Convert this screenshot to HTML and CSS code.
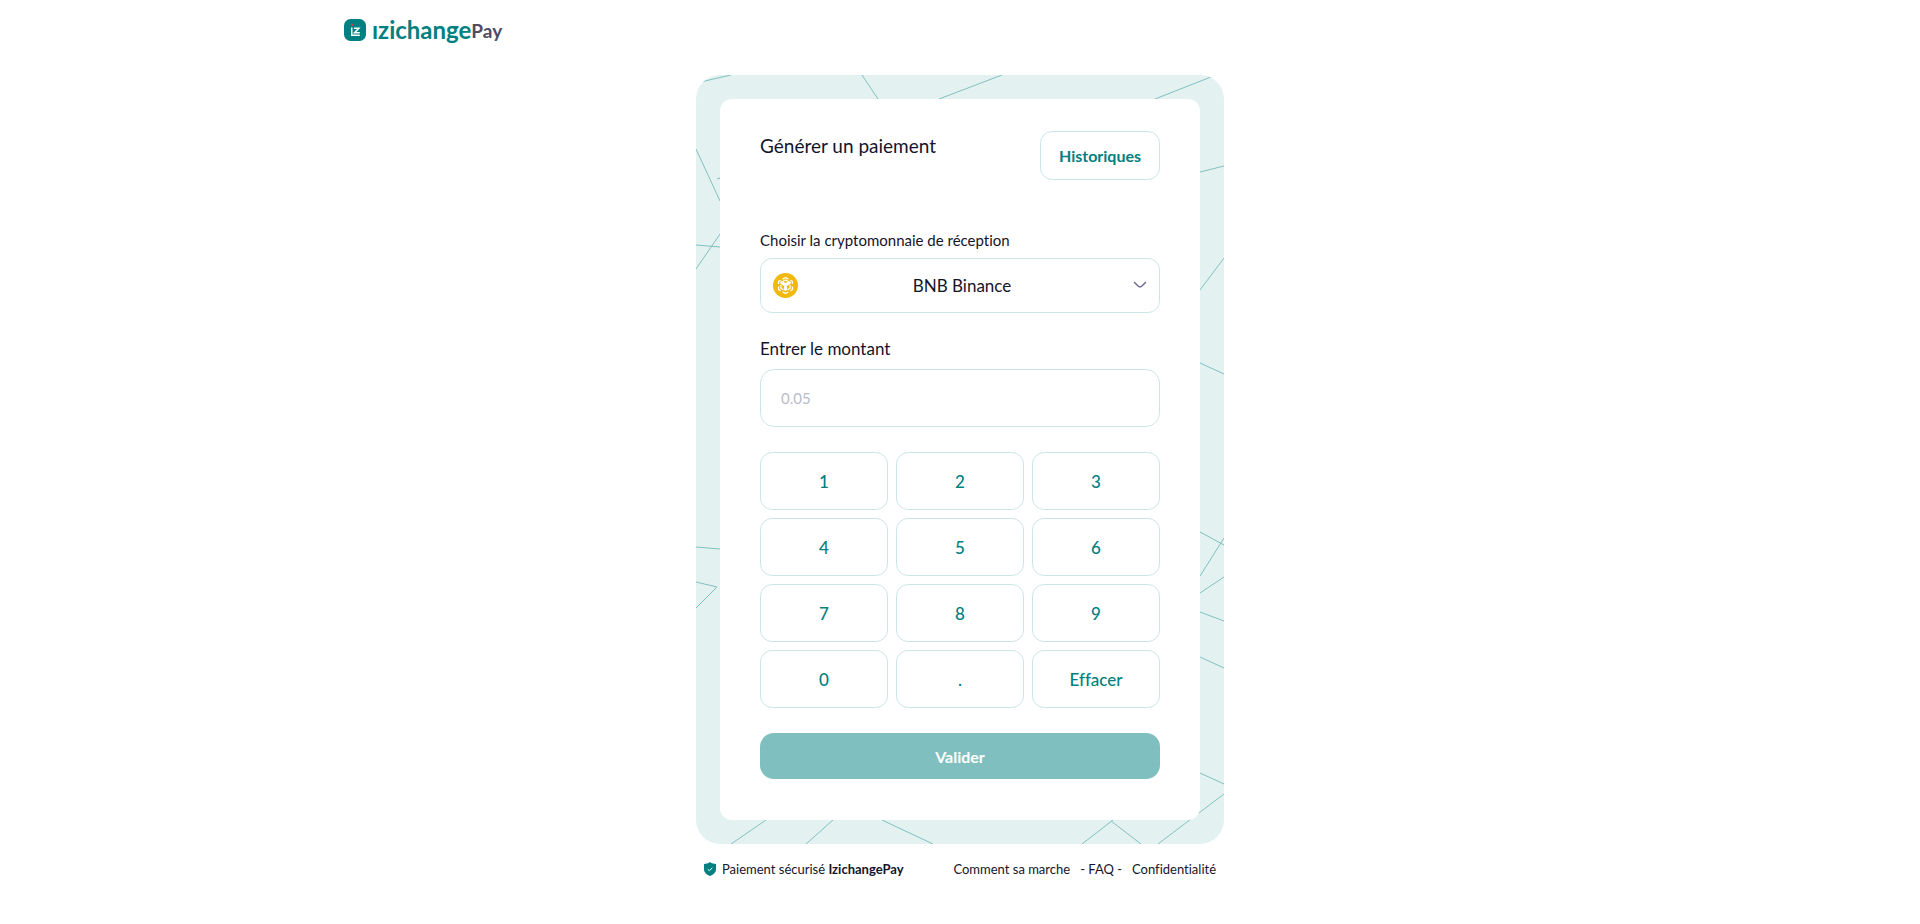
FILE: index.html
```html
<!DOCTYPE html>
<html lang="fr">
<head>
<meta charset="utf-8">
<meta name="viewport" content="width=device-width, initial-scale=1">
<title>IzichangePay</title>
<link rel="stylesheet" href="styles.css">
</head>
<body>
<header class="header">
  <a class="logo" href="#">
    <svg class="logo-mark" viewBox="0 0 22 22" aria-hidden="true">
      <rect width="22" height="22" rx="6.5" fill="#008080"/>
      <circle cx="8.200" cy="5.800" r="1.100" fill="#f0304a"/>
      <path d="M7 8.500H8.500V15.500H15.800V17H7Z" fill="#fff"/>
      <path d="M10 9.200H14.800L10.600 13.700H15.800" fill="none" stroke="#fff" stroke-width="1.600"/>
    </svg>
    <span class="logo-name">ızichange</span><span class="logo-pay">Pay</span>
  </a>
</header>
<main class="payment">
  <div class="panel">
    <svg class="panel-lines" viewBox="0 0 528 769" preserveAspectRatio="none" aria-hidden="true">
      <path d="M0 8L35 0M166 0L182 24M243 24L306 0M459 24L520 0M0 74L24 126M21 104L24 103M0 170L24 172M24 159L0 194M504 97L528 91M504 215L528 183M504 288L528 299M0 472L24 474M0 507L21 512L0 533M504 457L528 470M504 501L528 463M504 518L528 502M504 537L528 546M504 582L528 593M504 698L528 709M528 719L462 769M70 745L35 769M137 745L110 769M186 745L237 769M417 745L386 769M415 746L445 769"/>
    </svg>
    <form class="card">
      <div class="card-head">
        <h1 class="title">Générer un paiement</h1>
        <button class="history" type="button">Historiques</button>
      </div>
      <label class="label label-small" for="crypto">Choisir la cryptomonnaie de réception</label>
      <div class="select-box">
        <select class="select" id="crypto"><option>BNB Binance</option></select>
        <svg class="coin" viewBox="0 0 26 26" aria-hidden="true">
          <circle cx="13" cy="13" r="13" fill="#f0b90b"/>
          <g fill="none" stroke="#fff" stroke-width="1.300">
            <path d="M10 6.400L13 4.700L16 6.400M18 7.500L20.200 8.800V11.500M20.200 14V17.200L18 18.500M16 19.600L13 21.300L10 19.600M8 18.500L5.800 17.200V14M5.800 11.500V8.800L8 7.500"/>
            <path d="M10 8.900L13 7.200L16 8.900M8.200 12.500V15.900L11 17.500M17.800 12.500V15.900L15 17.500"/>
          </g>
          <path d="M7.600 9.200L9.400 8.300L13 10.400L16.600 8.300L18.400 9.200V11.200L14.600 13.400V17.600L13 18.600L11.400 17.600V13.400L7.600 11.200Z" fill="#fff"/>
        </svg>
        <svg class="chevron" viewBox="0 0 14 8" aria-hidden="true"><path d="M1.500 1.500C4 3.800 5.500 6 7 6S10 3.800 12.500 1.500"/></svg>
      </div>
      <label class="label" for="amount">Entrer le montant</label>
      <input class="amount" id="amount" type="text" inputmode="decimal" placeholder="0.05">
      <div class="keypad">
        <button class="key" type="button">1</button>
        <button class="key" type="button">2</button>
        <button class="key" type="button">3</button>
        <button class="key" type="button">4</button>
        <button class="key" type="button">5</button>
        <button class="key" type="button">6</button>
        <button class="key" type="button">7</button>
        <button class="key" type="button">8</button>
        <button class="key" type="button">9</button>
        <button class="key" type="button">0</button>
        <button class="key" type="button">.</button>
        <button class="key" type="button">Effacer</button>
      </div>
      <button class="submit" type="submit">Valider</button>
    </form>
  </div>
  <footer class="footer">
    <p class="secure">
      <svg class="shield" viewBox="0 0 12 14" aria-hidden="true">
        <path d="M6 0L7.800 1.200L12 2V7.500C12 10.500 9 13 6 14C3 13 0 10.500 0 7.500V2L4.200 1.200Z" fill="#008080"/>
        <path d="M3.800 7.200L5.400 8.700L8.300 5.800" fill="none" stroke="#fff"/>
      </svg>
      <span>Paiement sécurisé <strong>IzichangePay</strong></span>
    </p>
    <nav class="links">
      <a href="#">Comment sa marche</a>
      <a href="#">- FAQ -</a>
      <a href="#">Confidentialité</a>
    </nav>
  </footer>
</main>
</body>
</html>
```
FILE: styles.css
```css
* { box-sizing: border-box; }

body {
  margin: 0;
  background: #fff;
  color: #14142b;
  font-family: Lato, "Noto Sans", sans-serif;
  font-variant-ligatures: none;
}

button, input, select {
  font-family: inherit;
  font-variant-ligatures: inherit;
}

.header {
  max-width: 1280px;
  margin: 0 auto;
  padding: 16px 24px;
}

.logo {
  display: flex;
  align-items: center;
  height: 28px;
  color: #008080;
  font-weight: 700;
  text-decoration: none;
}

.logo-mark { width: 22px; height: 22px; margin-right: 6px; }
.logo-name { font-size: 24px; line-height: 28px; }
.logo-pay { color: #4e4b66; font-size: 19px; line-height: 28px; padding-top: 2px; }

.payment {
  max-width: 528px;
  margin: 15px auto 0;
}

.panel {
  position: relative;
  padding: 24px;
  overflow: hidden;
  border-radius: 24px;
  background: #e3f2f1;
}

.panel-lines {
  position: absolute;
  inset: 0;
  width: 100%;
  height: 100%;
  fill: none;
  stroke: #80c0bf;
}

.card {
  position: relative;
  display: flex;
  flex-direction: column;
  padding: 32px 40px 41px;
  border-radius: 12px;
  background: #fff;
}

.card-head {
  display: flex;
  align-items: flex-start;
  justify-content: space-between;
  margin-bottom: 50px;
}

.title {
  margin: 3px 0 0;
  font-size: 19px;
  font-weight: 400;
  line-height: 24px;
}

.history {
  width: 120px;
  height: 49px;
  padding: 0;
  border: 1px solid #cce6e6;
  border-radius: 12px;
  background: #fff;
  color: #008080;
  font-size: 16px;
  font-weight: 700;
}

.label { font-size: 17px; line-height: 20px; margin-bottom: 10px; }
.label-small { font-size: 15px; margin-bottom: 8px; }

.select-box {
  position: relative;
  margin-bottom: 26px;
}

.select {
  display: block;
  width: 100%;
  height: 55px;
  padding: 0 36px 0 40px;
  border: 1px solid #cce6e6;
  border-radius: 12px;
  appearance: none;
  background: #fff;
  color: #14142b;
  font-size: 17px;
  text-align: center;
  text-align-last: center;
}

.coin { position: absolute; top: 15px; left: 13px; width: 25px; height: 25px; }

.chevron {
  position: absolute;
  top: 23px;
  right: 13px;
  width: 14px;
  height: 8px;
  fill: none;
  stroke: #6e6b91;
  stroke-width: 1.5;
  stroke-linecap: round;
}

.amount {
  width: 100%;
  height: 58px;
  margin-bottom: 25px;
  padding: 0 20px;
  border: 1px solid #cce6e6;
  border-radius: 14px;
  color: #14142b;
  font-size: 15px;
}

.amount::placeholder { color: #b9bbc9; opacity: 1; }

.keypad {
  display: grid;
  grid-template-columns: repeat(3, 1fr);
  gap: 8px;
  margin-bottom: 25px;
}

.key {
  height: 58px;
  padding: 0;
  border: 1px solid #cce6e6;
  border-radius: 12px;
  background: #fff;
  color: #008080;
  font-size: 17px;
  font-weight: 500;
}

.submit {
  height: 46px;
  border: 0;
  border-radius: 14px;
  background: #80bfbf;
  color: #fff;
  font-size: 16px;
  font-weight: 700;
}

.footer {
  display: flex;
  align-items: center;
  justify-content: space-between;
  padding: 15px 8px;
  font-size: 13px;
  line-height: 20px;
}

.secure { display: flex; align-items: center; gap: 6px; margin: 0; }
.shield { width: 12px; height: 14px; }
.links { display: flex; gap: 10px; }
.links a { color: inherit; text-decoration: none; }
```
